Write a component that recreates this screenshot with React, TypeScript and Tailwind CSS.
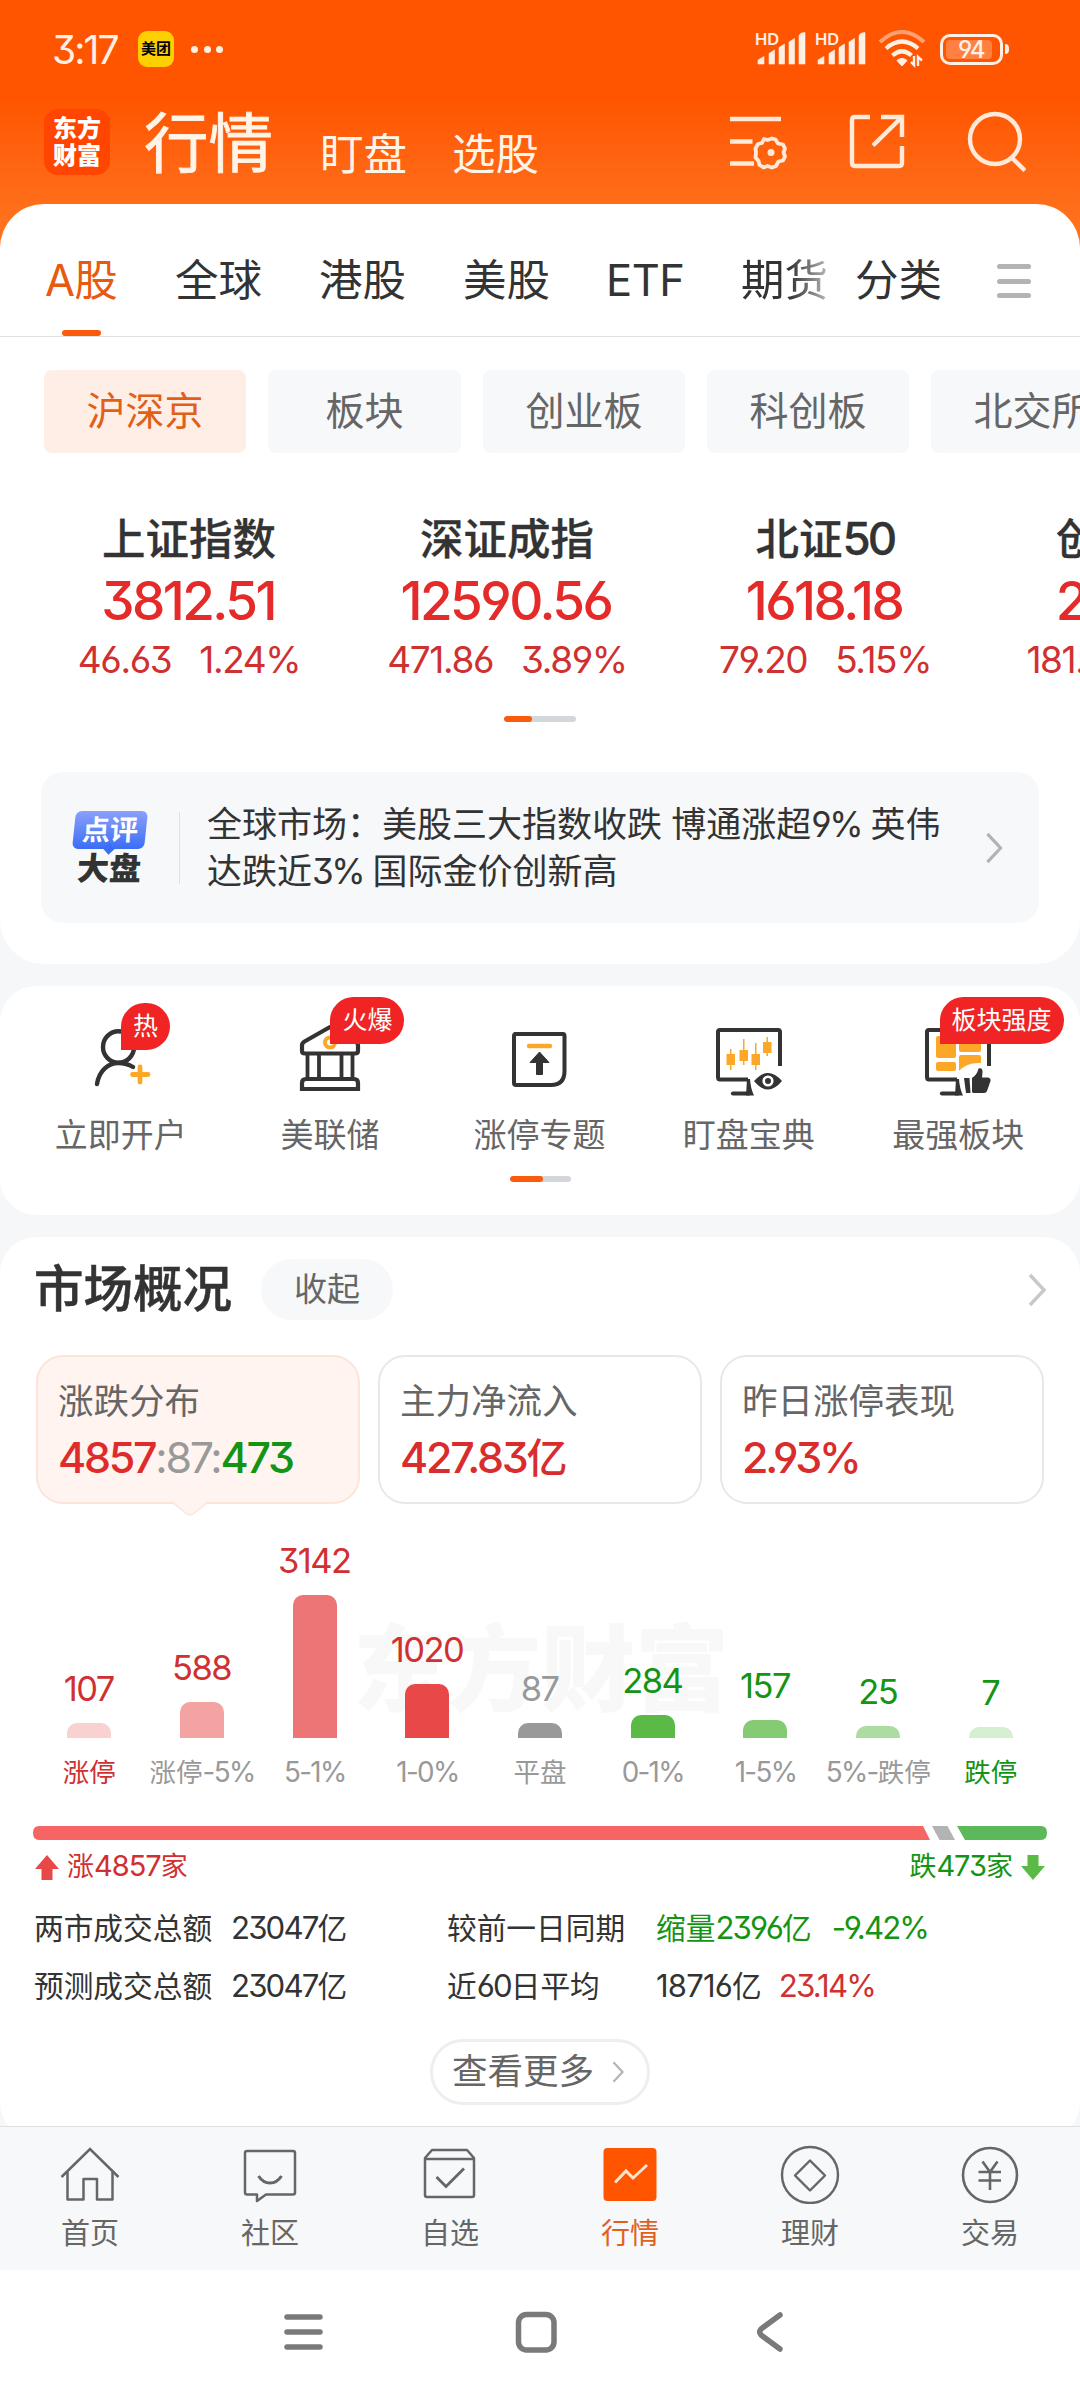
import type { ReactNode } from 'react';
import clsx from 'clsx';

const tabs = [
  { label: 'A股', box: 'w-[72px] ml-[45px]' },
  { label: '全球', box: 'w-[86px] ml-[58px]' },
  { label: '港股', box: 'w-[86px] ml-[58px]' },
  { label: '美股', box: 'w-[86px] ml-[58px]' },
  { label: 'ETF', box: 'w-[78px] ml-[57px]' },
];

const markets = [
  { label: '沪深京', width: 'w-[202px]' },
  { label: '板块', width: 'w-[193px]' },
  { label: '创业板', width: 'w-[202px]' },
  { label: '科创板', width: 'w-[202px]' },
  { label: '北交所', width: 'w-[202px]' },
];

const indices = [
  { name: '上证指数', value: '3812.51', change: '46.63', percent: '1.24%' },
  { name: '深证成指', value: '12590.56', change: '471.86', percent: '3.89%' },
  { name: <>北证<Num>50</Num></>, value: '1618.18', change: '79.20', percent: '5.15%' },
  { name: '创业板指', value: '2743.17', change: '181.86', percent: '6.88%' },
];

const shortcuts = [
  { label: '立即开户', icon: <AccountIcon />, badge: '热', badgePos: 'left-[105px] top-[17px] w-[49px]' },
  { label: '美联储', icon: <BankIcon />, badge: '火爆', badgePos: 'left-[105px] top-[11px] w-[74px]' },
  { label: '涨停专题', icon: <LimitUpIcon /> },
  { label: '盯盘宝典', icon: <WatchIcon /> },
  { label: '最强板块', icon: <SectorIcon />, badge: '板块强度', badgePos: 'left-[86px] top-[11px] w-[124px]' },
];

const distribution = [
  { label: '涨停', count: 107, height: 15, bar: 'bg-[#f9d1d1]', text: 'text-[#d03030]', labelText: 'text-[#d03030]' },
  { label: <>涨停<Num>-5%</Num></>, count: 588, height: 36, bar: 'bg-[#f4a3a3]', text: 'text-[#d03030]' },
  { label: <Num>5-1%</Num>, count: 3142, height: 143, bar: 'bg-[#ee7575]', text: 'text-[#d03030]' },
  { label: <Num>1-0%</Num>, count: 1020, height: 54, bar: 'bg-[#e84848]', text: 'text-[#d03030]' },
  { label: '平盘', count: 87, height: 15, bar: 'bg-[#999999]', text: 'text-[#999999]' },
  { label: <Num>0-1%</Num>, count: 284, height: 23, bar: 'bg-[#5bb946]', text: 'text-[#149414]' },
  { label: <Num>1-5%</Num>, count: 157, height: 18, bar: 'bg-[#84cb74]', text: 'text-[#149414]' },
  { label: <><Num>5%-</Num>跌停</>, count: 25, height: 12, bar: 'bg-[#addca2]', text: 'text-[#149414]' },
  { label: '跌停', count: 7, height: 11, bar: 'bg-[#d6eed1]', text: 'text-[#149414]', labelText: 'text-[#149414]' },
];

const navItems = [
  { label: '首页', icon: <HomeIcon /> },
  { label: '社区', icon: <CommunityIcon /> },
  { label: '自选', icon: <FavoriteIcon /> },
  { label: '行情', icon: <QuoteIcon />, active: true },
  { label: '理财', icon: <WealthIcon /> },
  { label: '交易', icon: <TradeIcon /> },
];

// Latin digits sit a little larger and tighter than the surrounding Chinese text
function Num({ children }: { children: ReactNode }) {
  return <span className="text-[1.05em] leading-none tracking-[-0.06em]">{children}</span>;
}

function AccountIcon() {
  return (
    <svg width="70" height="70" viewBox="0 0 70 70" fill="none" strokeLinecap="round">
      <g stroke="#333" strokeWidth="4.4">
        <ellipse cx="32.5" cy="26" rx="15.5" ry="15.7" />
        <path d="M11 63C13 50 22 42 32.500 42C38 42 43 43.500 47 46" />
      </g>
      <path d="M54 46V61M46.500 53.500H62" stroke="#fca728" strokeWidth="4.8" />
    </svg>
  );
}

function BankIcon() {
  return (
    <svg width="70" height="70" viewBox="0 0 70 70" fill="none" stroke="#333" strokeWidth="4.2" strokeLinejoin="round">
      <path d="M7 24.500Q7 22 9.500 20.500L35 6L60.500 20.500Q63 22 63 24.500V30Q63 32.500 60 32.500H10Q7 32.500 7 30Z" />
      <path d="M12.500 33V57M24 33V57M46.500 33V57M57.500 33V57" strokeWidth="3.8" />
      <path d="M7 68V62Q7 58 11 58H59Q63 58 63 62V68Z" strokeLinejoin="miter" />
      <circle cx="35" cy="21.500" r="5" stroke="#fca728" strokeWidth="4" />
    </svg>
  );
}

function LimitUpIcon() {
  return (
    <svg width="70" height="70" viewBox="0 0 70 70" fill="none">
      <path d="M10 13H59Q60.500 13 60.500 15V50Q60.500 64 47 64H12Q10 64 10 62V15Q10 13 12 13Z" stroke="#333" strokeWidth="4" />
      <path d="M25 25H46" stroke="#fca728" strokeWidth="4.400" strokeLinecap="round" />
      <path d="M35.500 31L45 41.500H38.500V53.500H32.500V41.500H26Z" fill="#333" stroke="#333" strokeLinejoin="round" />
    </svg>
  );
}

function MonitorFrame() {
  return (
    <>
      <path d="M65 44V10Q65 8 63 8H5Q3 8 3 10V55Q3 57.500 5 57.500H33" stroke="#333" strokeWidth="4" fill="none" />
      <path d="M18 71.500H34" stroke="#333" strokeWidth="4.200" strokeLinecap="round" />
      <path d="M32 57H35Q35.500 66 39 73.500H31Z" fill="#333" />
    </>
  );
}

function WatchIcon() {
  return (
    <svg width="68" height="76" viewBox="0 0 68 76" className="mt-px">
      <MonitorFrame />
      <g fill="#fca728">
        <path d="M11.500 32H20V43H11.500ZM24.500 28H33V39H24.500ZM36.500 32H45V43H36.500ZM48 20H56.500V31H48Z" />
        <path d="M15 27H16.500V48H15ZM28 17H29.500V43H28ZM40 21H41.500V48H40ZM51.500 15H53V34H51.500Z" />
      </g>
      <path d="M39 59Q46 51 53 51Q60 51 67 59Q60 67.500 53 67.500Q46 67.500 39 59Z" fill="#333" />
      <circle cx="53" cy="59" r="4.300" fill="#333" stroke="#fff" strokeWidth="2.600" />
    </svg>
  );
}

function SectorIcon() {
  return (
    <svg width="68" height="76" viewBox="0 0 68 76" className="mt-px">
      <MonitorFrame />
      <g fill="#fca728">
        <rect x="12" y="14" width="20" height="22" rx="2" />
        <rect x="35" y="14" width="22" height="16" rx="2" />
        <rect x="12" y="40" width="20" height="9" rx="2" />
        <path d="M37 33H55Q57 33 57 35V41Q43 40 35 49V35Q35 33 37 33Z" />
      </g>
      <g fill="#333">
        <path d="M40 56H45.500L46.500 71H42Z" />
        <path d="M48 70V56Q53 53 54.500 46.500Q59 45 58.500 51L58 55.500H64Q67 56 66.500 59L63 69Q62.500 71 60 71H49Z" />
      </g>
    </svg>
  );
}

function HomeIcon() {
  return (
    <svg width="60" height="60" viewBox="0 0 60 60" fill="none" stroke="#666" strokeWidth="2.500">
      <path d="M1.500 33L30 5L58.500 33" />
      <path d="M7.500 28V55.500H23.500V35H37V55.500H52.500V28" strokeLinejoin="round" />
    </svg>
  );
}

function CommunityIcon() {
  return (
    <svg width="60" height="60" viewBox="0 0 60 60" fill="none" stroke="#666" strokeWidth="2.500">
      <path d="M6.500 7H53Q55 7 55 9V48.500Q55 50.500 53 50.500H26L17 57V50.500H7Q5 50.500 5 48.500V9Q5 7 7 7" strokeLinejoin="round" />
      <path d="M18.500 32Q23 39 30 39Q37 39 41.500 32" strokeWidth="3" />
    </svg>
  );
}

function FavoriteIcon() {
  return (
    <svg width="60" height="60" viewBox="0 0 60 60" fill="none" stroke="#666" strokeWidth="2.500" strokeLinejoin="round">
      <path d="M5 14L12 6H47L54 14V51Q54 53 52 53H7Q5 53 5 51ZM5 15H54" />
      <path d="M16.500 33L26 42.500L44 24.500" strokeWidth="2.800" strokeLinejoin="miter" />
    </svg>
  );
}

function QuoteIcon() {
  return (
    <svg width="60" height="60" viewBox="0 0 60 60" fill="none">
      <rect x="3.500" y="4" width="53" height="53" rx="4" fill="#ff5500" />
      <path d="M15 38.500L26 27L33 34L47 21" stroke="#ffe3cf" strokeWidth="3" />
    </svg>
  );
}

function WealthIcon() {
  return (
    <svg width="60" height="60" viewBox="0 0 60 60" fill="none" stroke="#666" strokeWidth="2.400">
      <circle cx="30" cy="31" r="28" />
      <path d="M30 16.500L45 31.500L30 46.500L15 31.500Z" strokeLinejoin="round" />
    </svg>
  );
}

function TradeIcon() {
  return (
    <svg width="60" height="60" viewBox="0 0 60 60" fill="none" stroke="#666" strokeWidth="2.600">
      <circle cx="30" cy="31" r="27" />
      <path d="M22.500 17.500L30 28L37.500 17.500M30 28V46M18.500 28H41M18.500 36.500H41" />
    </svg>
  );
}

function ChevronRight({ width, height, color }: { width: number; height: number; color: string }) {
  return (
    <svg width={width} height={height} viewBox="0 0 18 34" fill="none" className="shrink-0">
      <path d="M2 2L16 17L2 32" stroke={color} strokeWidth="3.400" />
    </svg>
  );
}

function Signal() {
  return (
    <div className="relative h-9 w-[52px]">
      <span className="absolute -top-px left-0 text-[16.500px] leading-[18px] font-semibold">HD</span>
      <svg width="52" height="36" viewBox="0 0 52 36" fill="#fff0e6">
        <path d="M3 33V29L9 25.500V33ZM14 33V22.500L19.500 19V33ZM24 33V16.500L29.500 13V33ZM34 33V11L39.500 7.500V33ZM44 33V4.500Q45 1.500 50 1.500V33Z" stroke="#fff0e6" strokeWidth=".6" strokeLinejoin="round" />
      </svg>
    </div>
  );
}

function StatusBar() {
  return (
    <div className="flex h-[98px] items-center pl-[52px] text-[#fff0e6]">
      <span className="w-[86px] text-[39px] leading-none tracking-[-0.05em]">3:17</span>
      <span className="flex h-9 w-9 items-center justify-center rounded-[9px] bg-[#ffd000] text-[15px] font-bold text-black">美团</span>
      <span className="ml-[17px] flex gap-[5.500px]">
        <i className="size-[7px] rounded-full bg-[#fff0e6]" />
        <i className="size-[7px] rounded-full bg-[#fff0e6]" />
        <i className="size-[7px] rounded-full bg-[#fff0e6]" />
      </span>
      <div className="ml-auto mr-[71px] flex items-center">
        <Signal />
        <span className="ml-2"><Signal /></span>
        <svg width="48" height="38" viewBox="0 0 48 38" fill="none" className="ml-[11px]">
          <path d="M2 12Q24 -8 46 12" stroke="#ffa071" strokeWidth="4" />
          <path d="M8 18.500Q24 4.500 40 18.500M14.500 25.500Q24 17 33.500 25.500" stroke="#fff0e6" strokeWidth="4.200" />
          <path d="M19 30.500Q24 26.500 29 30.500L24 36Z" fill="#fff0e6" stroke="#fff0e6" strokeLinejoin="round" />
          <path d="M36 26V35L33 32M40 36V27L44 30.500" stroke="#fff0e6" strokeWidth="2.400" />
        </svg>
        <span className="ml-[14px] flex h-[31px] w-[63px] rounded-[10px] border-[3px] border-[#fff0e6] p-[3px]">
          <span className="w-[46px] rounded-[4px] bg-[#ff8040] pl-[12px] text-[24px] leading-[20px] tracking-[-0.06em] font-medium">94</span>
        </span>
        <span className="ml-0.5 h-2.5 w-1 rounded-r bg-[#fff0e6]" />
      </div>
    </div>
  );
}

function Header() {
  return (
    <header className="h-[260px] bg-linear-to-b from-[#ff5500] from-38% to-[#ff711c] to-85%">
      <StatusBar />
      <div className="flex h-[88px] pl-11 text-[#fff4e8]">
        <div className="mt-[11px] flex size-[66px] flex-col items-center justify-center rounded-[14px] bg-[#ff4500] text-[24px] leading-[27px] font-black text-white">
          <span>东方</span>
          <span>财富</span>
        </div>
        <span className="ml-[34px] w-[176px] text-[64.500px] leading-[92px] [-webkit-text-stroke:0.8px_#fff4e8]">行情</span>
        <span className="mt-[34px] w-[132px] text-[43.500px] leading-[44px]">盯盘</span>
        <span className="mt-[34px] text-[43.500px] leading-[44px]">选股</span>
        <svg width="310" height="66" viewBox="0 0 310 66" fill="none" stroke="#ffe9d8" strokeWidth="4.400" className="mt-[11px] ml-auto mr-[54px]">
          <path d="M14 10H65M14 32.500H36.500M14 54.500H38" />
          <path d="M51.500 31L56 29.500L59.500 30.500L62 34.500L67 35.500L69 39.500L67.500 43.500L69 47.500L67 51.500L62.500 52.500L60 57L56 58.500L51.500 57L47.500 58.500L43.500 56L42.500 52L39.500 48.500L40 44L39.500 39.500L42 35L46 34L48 30Z" strokeLinejoin="round" strokeWidth="3.800" />
          <circle cx="55" cy="43.500" r="3.500" fill="#ffe9d8" stroke="none" />
          <path d="M154 8H139Q136 8 136 11V54Q136 57 139 57H183Q186 57 186 54V37M165 8H186V28M184 10L157 36.500" />
          <circle cx="279" cy="30" r="25" />
          <path d="M295 48L309 61.500" />
        </svg>
      </div>
    </header>
  );
}

function MarketTabs() {
  return (
    <div className="relative flex h-[133px] border-b border-[#e0e0e0] text-[43.500px] leading-[153px] text-[#333]">
      {tabs.map((tab, i) => (
        <span key={tab.label} className={clsx('shrink-0 whitespace-nowrap', tab.box, i === 0 && 'tracking-[-0.02em] text-[#e85a10]', i === 4 && 'tracking-[-0.01em]')}>
          {tab.label}
        </span>
      ))}
      <span className="ml-[57px] w-[87px] bg-linear-to-r from-[#333] from-55% to-[#bbb] bg-clip-text text-transparent">期货</span>
      <span className="ml-[27px] w-[87px]">分类</span>
      <span className="ml-[55px] mt-[60px] flex h-[34px] flex-col justify-between">
        <i className="h-[5px] w-[34px] rounded-full bg-[#b3b3b3]" />
        <i className="h-[5px] w-[34px] rounded-full bg-[#b3b3b3]" />
        <i className="h-[5px] w-[34px] rounded-full bg-[#b3b3b3]" />
      </span>
      <i className="absolute bottom-0 left-[62px] h-1.5 w-[39px] rounded-full bg-[#fa5a0a]" />
    </div>
  );
}

function Pager({ className, active }: { className: string; active: string }) {
  return (
    <div className={clsx('mx-auto h-1.5 overflow-hidden rounded-full bg-[#d3d6db]', className)}>
      <div className={clsx('h-full rounded-full bg-[#fa5a0a]', active)} />
    </div>
  );
}

function MarketNews() {
  return (
    <div className="mx-[41px] mt-[50px] flex h-[151px] items-center rounded-[22px] bg-[#f7f8fa]">
      <div className="ml-8 flex w-[73px] flex-col items-center">
        <div className="relative flex h-[38px] w-[72px] -skew-x-6 items-center justify-center rounded-[6px] bg-linear-to-b from-[#8b9ffb] to-[#3a6df5] text-[28px] leading-none font-bold text-white">
          <span className="skew-x-3">点评</span>
          <i className="absolute -bottom-1 left-[33px] size-2 rotate-45 bg-[#3a6df5]" />
        </div>
        <div className="mt-1 -skew-x-3 text-[32px] leading-[31px] font-black text-[#333]">大盘</div>
      </div>
      <i className="ml-[33px] h-[72px] w-px bg-[#e0e0e0]" />
      <p className="ml-[27px] w-[760px] text-[35px] leading-[47px] [word-spacing:-0.5px] whitespace-nowrap text-[#333]">
        全球市场：美股三大指数收跌 博通涨超<span className="tracking-[-0.07em]">9%</span> 英伟
        <br />
        达跌近<span className="tracking-[-0.07em]">3%</span> 国际金价创新高
      </p>
      <span className="ml-[18px]"><ChevronRight width={18} height={32} color="#b3b3b3" /></span>
    </div>
  );
}

function Distribution() {
  return (
    <div className="relative mt-[13px] h-[277px]">
      <div className="absolute top-[93px] left-[353px] text-[94px] leading-[120px] font-black text-[#f8f8f8]">东方财富</div>
      <div className="relative flex pl-[33px]">
        {distribution.map((item) => (
          <div key={item.count} className="flex w-[112.700px] flex-col items-center">
            <div className="flex h-[221px] flex-col items-center justify-end">
              <span className={clsx('mb-[16px] pr-px text-[34.500px] leading-[36px] tracking-[-0.045em]', item.text)}>{item.count}</span>
              <div className={clsx('w-[44px] rounded-t-[10px]', item.bar)} style={{ height: item.height }} />
            </div>
            <span className={clsx('mt-[14px] text-[26.500px] leading-[40px] whitespace-nowrap', item.labelText ?? 'text-[#999]')}>{item.label}</span>
          </div>
        ))}
      </div>
    </div>
  );
}

function UpDownRatio() {
  return (
    <div className="mx-[33px] mt-[32px]">
      <svg width="1014" height="14" viewBox="0 0 1014 14">
        <path d="M6 0H890L897 14H6Q0 14 0 7Q0 0 6 0Z" fill="#f76464" />
        <path d="M899 0H914.500L922 14H906.500Z" fill="#b3b3b3" />
        <path d="M924 0H1008Q1014 0 1014 7Q1014 14 1008 14H932Z" fill="#5bb95b" />
      </svg>
      <div className="mt-[8px] flex h-[38px] items-center justify-between text-[27px] leading-[38px]">
        <span className="flex items-center gap-2 pl-0.5 text-[#d03030]">
          <svg width="24" height="25" viewBox="0 0 24 25" fill="#e84848"><path d="M12 0L24 14H17.500V25H6.500V14H0Z" /></svg>
          <span>涨<span className="text-[29px] leading-none tracking-[-0.035em]">4857</span>家</span>
        </span>
        <span className="flex items-center gap-2 pr-0.5 text-[#149414]">
          <span>跌<span className="text-[29px] leading-none tracking-[-0.035em]">473</span>家</span>
          <svg width="24" height="25" viewBox="0 0 24 25" fill="#5bb946"><path d="M12 25L24 11H17.500V0H6.500V11H0Z" /></svg>
        </span>
      </div>
    </div>
  );
}

function Turnover() {
  return (
    <div className="mt-[13px] grid grid-cols-[197px_216px_209px_1fr] pl-[34px] text-[29.700px] leading-[58px] whitespace-nowrap text-[#333]">
      <span>两市成交总额</span>
      <span><Num>23047</Num>亿</span>
      <span>较前一日同期</span>
      <span className="text-[#149414]">缩量<Num>2396</Num>亿<span className="ml-[20px]"><Num>-9.42%</Num></span></span>
      <span>预测成交总额</span>
      <span><Num>23047</Num>亿</span>
      <span>近<Num>60</Num>日平均</span>
      <span><span className="text-[31px] leading-none tracking-[-0.025em]">18716</span>亿<span className="ml-[17px] text-[#d03030]"><Num>23.14%</Num></span></span>
    </div>
  );
}

function MarketOverview() {
  return (
    <section className="mt-[22px] h-[902px] rounded-[36px] bg-white pt-[22px]">
      <div className="flex h-[61px] items-center">
        <h2 className="ml-[34px] text-[49.500px] leading-[61px] font-medium text-[#333] [-webkit-text-stroke:0.5px_#333]">市场概况</h2>
        <span className="ml-[29px] flex h-[61px] w-[132px] items-center justify-center rounded-full bg-[#f7f8fa] text-[33px] text-[#666]">收起</span>
        <span className="mr-[33px] ml-auto"><ChevronRight width={20} height={34} color="#c8c8c8" /></span>
      </div>

      <div className="mt-[35px] flex gap-[18px] pl-9">
        <div className="relative h-[149px] w-[324px] rounded-[27px] border-2 border-[#fbe5d8] bg-[#fff4ef] pt-[20px] pl-[20px]">
          <div className="text-[35.500px] leading-[50px] text-[#666]">涨跌分布</div>
          <div className="text-[43px] leading-[60px] font-medium tracking-[-0.053em] text-[#999]">
            <span className="text-[#df2b2b]">4857</span>
            <span className="font-normal">:87:</span>
            <span className="text-[#149414]">473</span>
          </div>
          <svg width="36" height="16" viewBox="0 0 36 16" className="absolute bottom-[-15px] left-[134px]">
            <path d="M0 0L15 13Q18 15 21 13L36 0Z" fill="#fff4ef" />
            <path d="M0 1L15 13Q18 15 21 13L36 1" fill="none" stroke="#fbe5d8" strokeWidth="1.500" />
          </svg>
        </div>
        <div className="h-[149px] w-[324px] rounded-[27px] border-2 border-[#e8e8e8] pt-[20px] pl-[20px]">
          <div className="text-[35.500px] leading-[50px] text-[#666]">主力净流入</div>
          <div className="text-[43px] leading-[60px] font-medium tracking-[-0.052em] text-[#d92c2c]">427.83<span className="text-[41px]">亿</span></div>
        </div>
        <div className="h-[149px] w-[324px] rounded-[27px] border-2 border-[#e8e8e8] pt-[20px] pl-[20px]">
          <div className="text-[35.500px] leading-[50px] text-[#666]">昨日涨停表现</div>
          <div className="text-[43px] leading-[60px] font-medium tracking-[-0.075em] text-[#d92c2c]">2.93%</div>
        </div>
      </div>

      <Distribution />
      <UpDownRatio />
      <Turnover />

      <button className="mx-auto mt-[24px] flex h-[66px] w-[220px] items-center justify-center gap-[18px] rounded-full border-[3px] border-[#eee] pr-1 text-[35.500px] leading-none text-[#666]">
        查看更多
        <ChevronRight width={12} height={22} color="#b3b3b3" />
      </button>
    </section>
  );
}

export default function App() {
  return (
    <div className="flex h-[2400px] w-[1080px] flex-col overflow-hidden bg-[#f6f7f9] font-['Inter','Noto_Sans_CJK_SC',sans-serif] [font-feature-settings:'cv03','cv04','cv09']">
      <Header />

      <main className="-mt-14 h-[1922px] shrink-0 overflow-hidden">
        <section className="h-[760px] overflow-hidden rounded-[44px] bg-white">
          <MarketTabs />
          <div className="mt-[33px] ml-11 flex gap-[22px] text-[39px] leading-[82px]">
            {markets.map((market, i) => (
              <span key={market.label} className={clsx('h-[83px] shrink-0 rounded-[8px] text-center', market.width, i === 0 ? 'bg-[#ffeee6] text-[#e06018]' : 'bg-[#f7f8fa] text-[#666]')}>
                {market.label}
              </span>
            ))}
          </div>
          <div className="mt-[59px] ml-[30px] flex h-[172px]">
            {indices.map((index) => (
              <div key={index.value} className="w-[318px] shrink-0 text-center">
                <div className="text-[43.500px] leading-[54px] font-medium text-[#333] [-webkit-text-stroke:0.3px_#333]">{index.name}</div>
                <div className="pr-[2px] text-[53px] leading-[70px] font-medium tracking-[-0.048em] text-[#e52a2a]">{index.value}</div>
                <div className="flex justify-center gap-[28px] text-[37px] leading-[48px] tracking-[-0.038em] text-[#cf3030]">
                  <span>{index.change}</span>
                  <span>{index.percent}</span>
                </div>
              </div>
            ))}
          </div>
          <div className="mt-[32px]"><Pager className="w-[72px]" active="w-[28px]" /></div>
          <MarketNews />
        </section>

        <section className="mt-[22px] h-[229px] rounded-[36px] bg-white">
          <div className="flex h-[190px] pl-4">
            {shortcuts.map((item) => (
              <div key={item.label} className="relative flex w-[209.400px] flex-col items-center pt-[35px]">
                <div className="flex h-[90px] items-start justify-center">{item.icon}</div>
                <span className="text-[33px] leading-[49px] text-[#666]">{item.label}</span>
                {item.badge && (
                  <span className={clsx('absolute h-[47px] rounded-[24px] rounded-bl-none bg-[#f02424] text-center text-[25px] leading-[47px] text-white', item.badgePos)}>
                    {item.badge}
                  </span>
                )}
              </div>
            ))}
          </div>
          <Pager className="w-[61px]" active="w-[33px]" />
        </section>

        <MarketOverview />
      </main>

      <nav className="flex h-[144px] shrink-0 border-t border-[#e0e1e4] bg-[#f7f8fa]">
        {navItems.map((item) => (
          <div key={item.label} className={clsx('flex flex-1 flex-col items-center pt-[17px] text-[29px]', item.active ? 'text-[#e0601c]' : 'text-[#666]')}>
            {item.icon}
            <span className="mt-[9px] leading-[42px]">{item.label}</span>
          </div>
        ))}
      </nav>

      <div className="flex h-[130px] shrink-0 items-center bg-white">
        <svg width="1080" height="60" viewBox="0 0 1080 60" fill="none" stroke="#7a7a7a" strokeWidth="5.500" strokeLinecap="round" strokeLinejoin="round">
          <path d="M287 12H320M287 27H320M287 42H320" />
          <rect x="518.500" y="9.500" width="35.500" height="35.500" rx="8" />
          <path d="M780 10L761 24Q758.500 27 761 30L780 44" />
        </svg>
      </div>
    </div>
  );
}
